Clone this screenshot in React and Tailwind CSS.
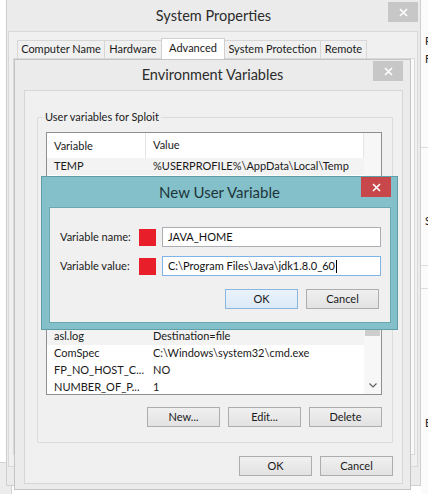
import React from "react";

const rows = [
  ["TEMP", "%USERPROFILE%\\AppData\\Local\\Temp", true],
  ["", ""],
  ["", ""],
  ["", ""],
  ["", ""],
  ["", ""],
  ["", ""],
  ["", ""],
  ["", ""],
  ["", ""],
  ["asl.log", "Destination=file", true],
  ["ComSpec", "C:\\Windows\\system32\\cmd.exe"],
  ["FP_NO_HOST_C...", "NO"],
  ["NUMBER_OF_P...", "1"],
];

const tabs = [
  ["Computer Name", "w-[88px]"],
  ["Hardware", "w-[58px]"],
  ["Advanced", "w-[64px]", true],
  ["System Protection", "w-[97px]"],
  ["Remote", "w-[47px]"],
];

function CloseBtn({ red, className }) {
  return (
    <div
      className={`absolute flex h-[20px] w-[30px] items-center justify-center ${
        red ? "bg-[#c7474a]" : "bg-[#c7c7c7]"
      } ${className}`}
    >
      <svg width="9" height="9" viewBox="0 0 9 9">
        <path d="M1 1L8 8M8 1L1 8" stroke="#fff" strokeWidth="1.6" />
      </svg>
    </div>
  );
}

function Btn({ children, primary }) {
  return (
    <div
      className={`flex h-[20px] w-[73px] shrink-0 items-center justify-center border text-[11px] text-[#1a1a1a] ${
        primary
          ? "border-[#8bb6dd] bg-linear-to-b from-[#eaf3fb] to-[#dbe9f6]"
          : "border-[#adadad] bg-linear-to-b from-[#f0f0f0] to-[#e2e2e2]"
      }`}
    >
      {children}
    </div>
  );
}

function Field({ label, value, focused }) {
  return (
    <div className="flex items-center">
      <span className="w-[89px] shrink-0 whitespace-nowrap pl-[10px] text-[11px] text-[#1a1a1a]">
        {label}
      </span>
      <span className="h-[17px] w-[17px] shrink-0 bg-[#e81f2b]" />
      <div
        className={`ml-[6px] flex h-[20px] w-[219px] shrink-0 items-center whitespace-nowrap border bg-white pl-[5px] text-[11px] text-[#111] ${
          focused ? "border-[#7eb4ea]" : "border-[#abadb3]"
        }`}
      >
        {value}
        {focused && <span className="ml-[1px] h-[13px] w-[1px] bg-black" />}
      </div>
    </div>
  );
}

export default function App() {
  return (
    <div className="relative h-[494px] w-[428px] overflow-hidden bg-white font-['Lato','Noto_Sans',sans-serif]">
      {/* window behind, right edge */}
      <div className="absolute left-[421px] top-0 h-[494px] w-[20px] bg-[#fbfbfb] text-[11px] leading-[15px] text-[#222]">
        <div className="ml-[4px] mt-[33px]">P</div>
        <div className="ml-[4px] mt-[3px]">F</div>
        <div className="mt-[81px] h-px bg-[#dcdcdc]" />
        <div className="ml-[4px] mt-[65px]">S</div>
        <div className="mt-[37px] h-px bg-[#dcdcdc]" />
        <div className="mt-[22px] h-px bg-[#dcdcdc]" />
        <div className="ml-[4px] mt-[126px]">B</div>
        <div className="ml-[3px] mt-[60px]">1</div>
      </div>
      <div className="absolute left-0 top-[462px] h-[32px] w-[12px] border-r border-t border-[#d4d4d4] bg-[#ececec]" />

      {/* System Properties */}
      <div className="absolute left-[6px] top-[-9px] h-[495px] w-[415px] border border-[#cfcfcf] bg-[#ebebeb]">
        <div className="flex h-[39px] items-center justify-center pt-[8px] text-[14.5px] text-[#2b2b2b]">
          System Properties
        </div>
        <CloseBtn className="left-[381px] top-[10px]" />
        <div className="ml-[1px] mr-[2px] flex h-[436px] flex-col border border-[#d9d9d9] bg-[#f0f0f0]">
          <div className="ml-[8px] mt-[6px] flex h-[20px] items-end">
            {tabs.map(([t, w, sel]) => (
              <div
                key={t}
                className={`-ml-px flex items-center justify-center border border-b-0 text-[11px] text-[#1a1a1a] first:ml-0 ${w} ${
                  sel
                    ? "relative z-10 mb-[-1px] h-[21px] border-[#d0d0d0] bg-white pb-[2px]"
                    : "h-[18px] border-[#d6d6d6] bg-[#f0f0f0]"
                }`}
              >
                {t}
              </div>
            ))}
          </div>
          <div className="ml-[4px] mr-[2px] h-[397px] border border-[#d9d9d9] bg-[#fafafa]" />
        </div>
      </div>

      {/* Environment Variables */}
      <div className="absolute left-[14px] top-[59px] h-[431px] w-[397px] border border-[#c4c4c4] bg-[#ebebeb]">
        <div className="flex h-[30px] items-center justify-center text-[14.5px] text-[#2b2b2b]">
          Environment Variables
        </div>
        <CloseBtn className="left-[358px] top-[1px]" />
        <div className="ml-[9px] mr-[7px] h-[394px] border border-[#d6d6d6] bg-[#f0f0f0] text-[11px] text-[#1a1a1a]">
          <div className="relative ml-[12px] mt-[26px] h-[326px] w-[356px] border border-[#dcdcdc]">
            <span className="absolute left-[5px] top-[-9px] bg-[#f0f0f0] px-[2px] leading-[15px]">
              User variables for Sploit
            </span>
            <div className="ml-[8px] mt-[14px] flex h-[263px] w-[336px] border border-[#8e8f8f] bg-white">
              <div className="flex-1 overflow-hidden">
                <div className="flex h-[25px] items-center border-r border-[#e5e5e5]">
                  <span className="w-[99px] border-r border-[#e5e5e5] pl-[7px] leading-[25px]">Variable</span>
                  <span className="pl-[7px]">Value</span>
                </div>
                {rows.map(([n, v, shade], i) => (
                  <div
                    key={i}
                    className={`flex h-[17px] items-center whitespace-nowrap ${shade ? "bg-[#f3f3f3]" : ""}`}
                  >
                    <span className="w-[99px] pl-[7px]">{n}</span>
                    <span className="pl-[7px]">{v}</span>
                  </div>
                ))}
              </div>
              <div className="flex w-[17px] flex-col bg-[#f7f7f7]">
                <div className="h-[178px]" />
                <div className="mx-[1px] h-[25px] bg-[#cdcdcd]" />
                <div className="flex-1" />
                <div className="flex h-[17px] items-center justify-center">
                  <svg width="8" height="5" viewBox="0 0 8 5">
                    <path d="M0.5 0.5L4 4L7.5 0.5" stroke="#606060" strokeWidth="1.2" fill="none" />
                  </svg>
                </div>
              </div>
            </div>
            <div className="ml-[8px] mt-[12px] flex w-[336px] justify-end gap-[8px]">
              <Btn>New...</Btn>
              <Btn>Edit...</Btn>
              <Btn>Delete</Btn>
            </div>
          </div>
          <div className="ml-[12px] mt-[13px] flex w-[356px] justify-end gap-[8px]">
            <Btn>OK</Btn>
            <Btn>Cancel</Btn>
          </div>
        </div>
      </div>

      {/* New User Variable */}
      <div className="absolute left-[41px] top-[176px] h-[154px] w-[357px] border border-[#5f9ea9] bg-[#83c0ca]">
        <div className="flex h-[30px] items-center justify-center text-[15px] text-[#1e353a]">
          New User Variable
        </div>
        <CloseBtn red className="left-[319px] top-0" />
        <div className="ml-[7px] flex h-[116px] w-[342px] flex-col border border-[#6aa7b1] bg-[#f0f0f0] pt-[19px]">
          <Field label="Variable name:" value="JAVA_HOME" />
          <div className="mt-[9px]">
            <Field label="Variable value:" value="C:\Program Files\Java\jdk1.8.0_60" focused />
          </div>
          <div className="mr-[11px] mt-[13px] flex justify-end gap-[8px]">
            <Btn primary>OK</Btn>
            <Btn>Cancel</Btn>
          </div>
        </div>
      </div>
    </div>
  );
}
